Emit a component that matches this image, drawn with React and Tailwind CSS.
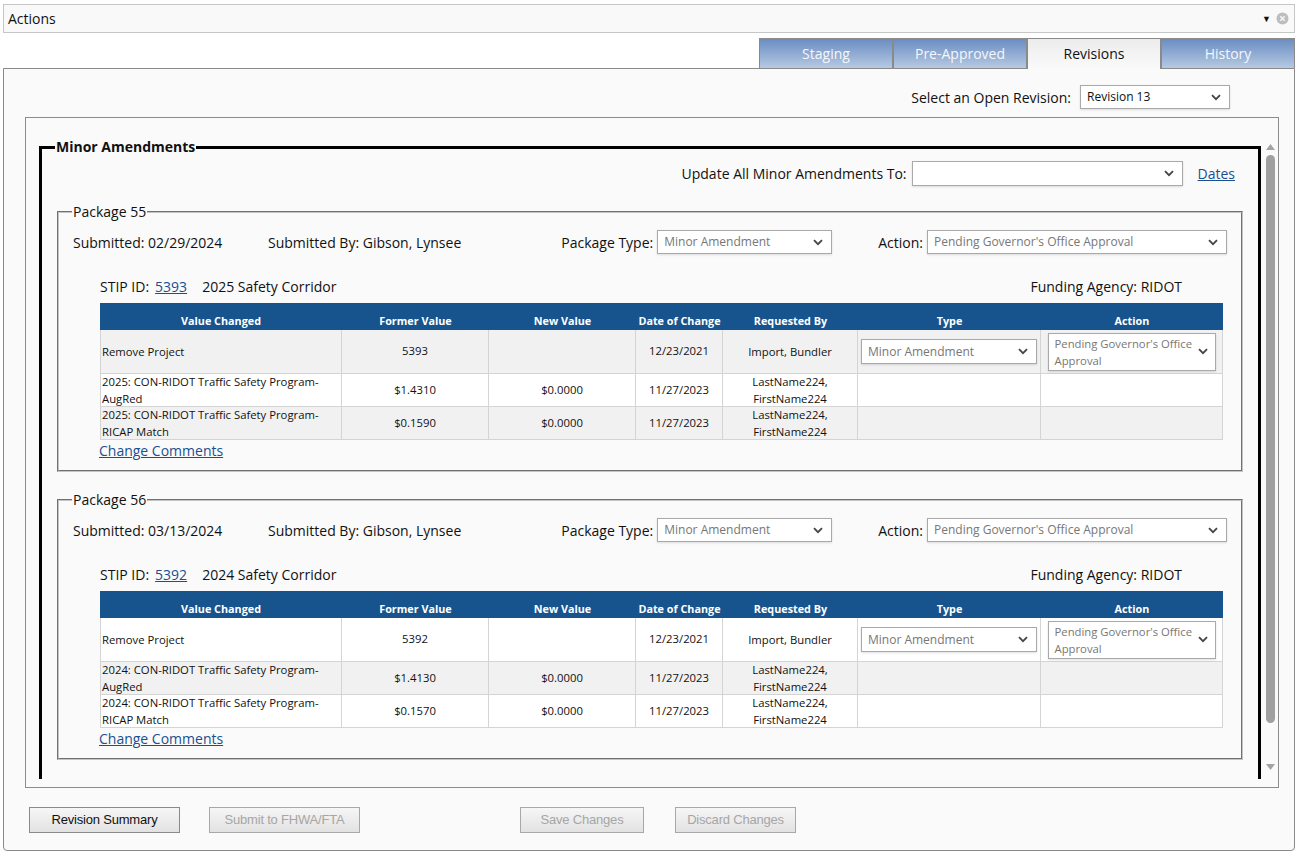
import React from "react";

const F = { fontFamily: '"Open Sans", "Noto Sans", Arial, sans-serif' };

function Chevron({ className = "" }) {
  return (
    <svg width="10" height="7" viewBox="0 0 10 7" className={`shrink-0 ${className}`}>
      <path d="M1 1.2 L5 5.2 L9 1.2" fill="none" stroke="#444" strokeWidth="1.8" />
    </svg>
  );
}

function Select({ w, h = 24, text, textCls = "text-[12px] text-[#777]" }) {
  return (
    <div
      className={`flex items-center justify-between border border-[#a9a9a9] bg-white pl-[6px] pr-[8px] shadow-[0_1px_2px_rgba(0,0,0,0.12)] ${w}`}
      style={{ height: h }}
    >
      <span className={`${textCls} leading-none whitespace-nowrap`}>{text}</span>
      <Chevron />
    </div>
  );
}

const cols = ["w-[242px]", "w-[147px]", "w-[147px]", "w-[87px]", "w-[135px]", "w-[183px]", "w-[182px]"];
const heads = ["Value Changed", "Former Value", "New Value", "Date of Change", "Requested By", "Type", "Action"];

function Table({ rows, firstGray }) {
  return (
    <div className="ml-[41px] mr-[18px] text-[11.3px]">
      <div className="flex h-[27px] items-end bg-[#17548e] pb-[1px] text-[10.8px] font-bold text-white">
        {heads.map((h, i) => (
          <div key={h} className={`${cols[i]} whitespace-nowrap text-center leading-[16px]`}>{h}</div>
        ))}
      </div>
      {rows.map((r, ri) => {
        const gray = firstGray ? ri % 2 === 0 : ri % 2 === 1;
        const hgt = ri === 0 ? "h-[44px]" : "h-[33px]";
        return (
          <div key={ri} className={`flex ${hgt} ${gray ? "bg-[#f1f1f1]" : "bg-white"} border-b border-[#d4d4d4] text-[#111]`}>
            <div className={`${cols[0]} flex items-center whitespace-nowrap border-l border-r border-[#d4d4d4] pl-[1px] leading-[17px]`}>{r[0]}</div>
            <div className={`${cols[1]} flex items-center justify-center border-r border-[#d4d4d4]`}>{r[1]}</div>
            <div className={`${cols[2]} flex items-center justify-center border-r border-[#d4d4d4]`}>{r[2]}</div>
            <div className={`${cols[3]} flex items-center justify-center border-r border-[#d4d4d4]`}>{r[3]}</div>
            <div className={`${cols[4]} flex items-center justify-center whitespace-nowrap border-r border-[#d4d4d4] text-center leading-[17px]`}>{r[4]}</div>
            <div className={`${cols[5]} flex items-center justify-center border-r border-[#d4d4d4]`}>
              {ri === 0 && <Select w="w-[176px]" h={25} text="Minor Amendment" />}
            </div>
            <div className={`${cols[6]} flex items-center justify-center border-r border-[#d4d4d4]`}>
              {ri === 0 && (
                <div className="flex h-[38px] w-[168px] items-center justify-between border border-[#a9a9a9] bg-white pl-[6px] pr-[7px] shadow-[0_1px_2px_rgba(0,0,0,0.12)]">
                  <span className="whitespace-nowrap text-[11.3px] leading-[17px] text-[#777]">Pending Governor's Office<br />Approval</span>
                  <Chevron />
                </div>
              )}
            </div>
          </div>
        );
      })}
      <div className="ml-[-1px] mt-[1px] h-[20px] leading-[20px] text-[14px]">
        <span className="text-[#1b4f8f] underline">Change Comments</span>
      </div>
    </div>
  );
}

function Package({ num, date, stip, title, rows, firstGray }) {
  return (
    <fieldset className="mx-[15px] border-2 border-[#c4c4c4] [border-style:groove] pb-[9px]">
      <legend className="ml-[13px] px-[1px] text-[14px] leading-[20px] text-[#111]">Package {num}</legend>
      <div className="mt-[7px] flex h-[26px] items-center pl-[14px] pr-[14px] text-[14px] text-[#111]">
        <div className="w-[195px]">Submitted: {date}</div>
        <div className="flex-1">Submitted By: Gibson, Lynsee</div>
        <span className="mr-[4px]">Package Type:</span>
        <Select w="w-[175px]" text="Minor Amendment" />
        <span className="ml-[46px] mr-[4px]">Action:</span>
        <Select w="w-[300px]" text="Pending Governor's Office Approval" />
      </div>
      <div className="mt-[21px] flex h-[20px] items-center pl-[41px] pr-[59px] text-[14px] text-[#111]">
        <span>STIP ID:</span>
        <span className="ml-[6px] text-[#1b4f8f] underline">{stip}</span>
        <span className="ml-[15px]">{title}</span>
        <span className="ml-auto">Funding Agency: RIDOT</span>
      </div>
      <div className="mt-[7px]">
        <Table rows={rows} firstGray={firstGray} />
      </div>
    </fieldset>
  );
}

function Tab({ label, active }) {
  return active ? (
    <div className="flex h-[31px] w-[134px] items-center justify-center border border-b-0 border-[#8a8a8a] bg-gradient-to-b from-[#ececec] to-[#fafafa] pb-[2px] text-[14px] text-[#111]">
      {label}
    </div>
  ) : (
    <div className="flex h-[30px] w-[134px] items-center justify-center border border-b-0 border-[#8a8a8a] bg-gradient-to-b from-[#6b8dc2] to-[#b6c9e2] pb-[1px] text-[14px] text-[#f4f7fb]">
      {label}
    </div>
  );
}

function Button({ label, w, disabled }) {
  return (
    <div
      className={`flex h-[26px] items-center justify-center border bg-gradient-to-b from-[#f6f6f6] to-[#e2e2e2] text-[13px] ${w} ${
        disabled ? "border-[#a8a8a8] text-[#a6a6a6]" : "border-[#8a8a8a] text-[#111]"
      }`}
      style={{ fontFamily: '"Liberation Sans", Arial, sans-serif', letterSpacing: "-0.2px" }}
    >
      {label}
    </div>
  );
}

export default function App() {
  const rows55 = [
    ["Remove Project", "5393", "", "12/23/2021", "Import, Bundler"],
    [<>2025: CON-RIDOT Traffic Safety Program-<br />AugRed</>, "$1.4310", "$0.0000", "11/27/2023", <>LastName224,<br />FirstName224</>],
    [<>2025: CON-RIDOT Traffic Safety Program-<br />RICAP Match</>, "$0.1590", "$0.0000", "11/27/2023", <>LastName224,<br />FirstName224</>],
  ];
  const rows56 = [
    ["Remove Project", "5392", "", "12/23/2021", "Import, Bundler"],
    [<>2024: CON-RIDOT Traffic Safety Program-<br />AugRed</>, "$1.4130", "$0.0000", "11/27/2023", <>LastName224,<br />FirstName224</>],
    [<>2024: CON-RIDOT Traffic Safety Program-<br />RICAP Match</>, "$0.1570", "$0.0000", "11/27/2023", <>LastName224,<br />FirstName224</>],
  ];
  return (
    <div className="h-[859px] w-[1298px] overflow-hidden bg-white pt-[4px]" style={F}>
      {/* Actions bar */}
      <div className="mx-[3px] flex h-[29px] items-center border border-[#c6c6c6] bg-[#f9f9f9] pl-[4px] pr-[5px] text-[14px] text-[#111]">
        <span>Actions</span>
        <span className="ml-auto mr-[5px] text-[9px] text-[#111]">▼</span>
        <svg width="13" height="13" viewBox="0 0 13 13">
          <circle cx="6.5" cy="6.5" r="6" fill="#bdbdbd" />
          <path d="M4.3 4.3 L8.7 8.7 M8.7 4.3 L4.3 8.7" stroke="#f4f4f4" strokeWidth="1.6" />
        </svg>
      </div>

      {/* Tabs */}
      <div className="relative z-10 mt-[5px] flex h-[30px] items-start justify-end pr-[3px]">
        <Tab label="Staging" />
        <Tab label="Pre-Approved" />
        <Tab label="Revisions" active />
        <Tab label="History" />
      </div>

      {/* Main panel */}
      <div className="mx-[3px] flex h-[783px] flex-col rounded-b-[4px] border border-[#8a8a8a] bg-[#fafafa]">
        <div className="mt-[15px] flex h-[26px] items-center justify-end pr-[64px] text-[14px] text-[#111]">
          <span className="mr-[9px]">Select an Open Revision:</span>
          <Select w="w-[150px]" text="Revision 13" textCls="text-[12px] text-[#111]" />
        </div>

        {/* scroll box */}
        <div className="ml-[21px] mr-[15px] mt-[7px] flex h-[671px] border border-[#8c8c8c] pb-[8px]">
          <div className="h-full flex-1 overflow-hidden pl-[13px] pr-[2px]">
            <fieldset className="mt-[19px] border-[3px] border-black pb-[40px]">
              <legend className="ml-[13px] px-[1px] text-[14px] font-bold leading-[20px] text-[#111]">Minor Amendments</legend>
              <div className="mt-[3px] flex h-[26px] items-center justify-end pr-[23px] text-[14px] text-[#111]">
                <span className="mr-[5px]">Update All Minor Amendments To:</span>
                <Select w="w-[271px]" h={25} text="" />
                <span className="ml-[15px] text-[#1b4f8f] underline">Dates</span>
              </div>
              <div className="mt-[16px]">
                <Package num="55" date="02/29/2024" stip="5393" title="2025 Safety Corridor" rows={rows55} firstGray />
              </div>
              <div className="mt-[18px]">
                <Package num="56" date="03/13/2024" stip="5392" title="2024 Safety Corridor" rows={rows56} />
              </div>
            </fieldset>
          </div>
          {/* scrollbar */}
          <div className="flex w-[16px] flex-col items-center pt-[26px]">
            <svg width="9" height="6" viewBox="0 0 9 6"><path d="M0 6 L4.5 0 L9 6 Z" fill="#a3a3a3" /></svg>
            <div className="mt-[5px] h-[568px] w-[9px] rounded-full bg-[#a0a0a0]" />
            <div className="flex-1" />
            <svg width="9" height="6" viewBox="0 0 9 6" className="mb-[9px]"><path d="M0 0 L4.5 6 L9 0 Z" fill="#a3a3a3" /></svg>
          </div>
        </div>

        {/* Buttons */}
        <div className="ml-[25px] mt-[19px] flex">
          <Button label="Revision Summary" w="w-[151px]" />
          <div className="ml-[29px]"><Button label="Submit to FHWA/FTA" w="w-[151px]" disabled /></div>
          <div className="ml-[160px]"><Button label="Save Changes" w="w-[124px]" disabled /></div>
          <div className="ml-[31px]"><Button label="Discard Changes" w="w-[121px]" disabled /></div>
        </div>
      </div>
    </div>
  );
}
